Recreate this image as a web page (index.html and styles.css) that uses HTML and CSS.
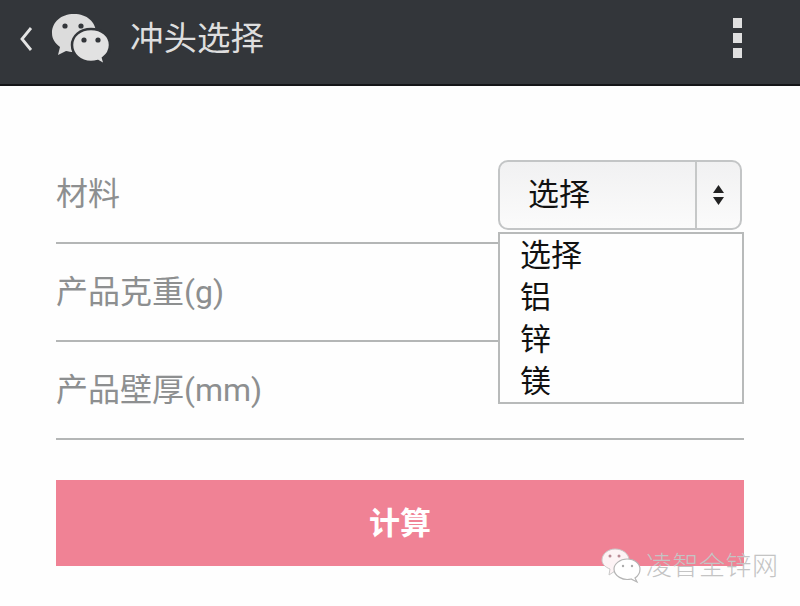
FILE: index.html
```html
<!DOCTYPE html>
<html>
<head>
  <meta http-equiv="content-type" content="text/html; charset=UTF-8">
  <title>冲头选择</title>
  <link rel="stylesheet" href="styles.css">
</head>
<body>
<div class="topbar">
  <svg class="back" width="14" height="26" viewBox="0 0 14 26"><path d="M12 2 L3 13 L12 24" fill="none" stroke="#e4e4e4" stroke-width="2.8"/></svg>
  <svg class="logo" width="60" height="54" viewBox="0 0 60 54">
    <path d="M23 1 C36 1 45 9 45 20 C45 31 36 39 23 39 C20 39 17 38.500 15 38 L7 42 L9 34 C4 30 1 26 1 20 C1 9 10 1 23 1 Z" fill="#dcdcdc"/>
    <path d="M40 16 C51 16 59 23 59 32 C59 38 56 42 52 45 L54 52 L47 48 C45 48.500 42 49 40 49 C29 49 21 41 21 32 C21 23 29 16 40 16 Z" fill="#e2e2e2" stroke="#33363a" stroke-width="2.500"/>
    <circle cx="14" cy="13" r="2.600" fill="#33363a"/>
    <circle cx="30" cy="13" r="2.600" fill="#33363a"/>
    <circle cx="33" cy="27" r="2.600" fill="#33363a"/>
    <circle cx="47" cy="27" r="2.600" fill="#33363a"/>
  </svg>
  <span class="title">冲头选择</span>
  <div class="dots"><i></i><i></i><i></i></div>
</div>

<div class="form">
  <div class="row"><span class="label">材料</span>
    <div class="select">
      <span class="select-text">选择</span>
      <span class="select-arrows">
        <svg width="11" height="20" viewBox="0 0 11 20"><path d="M5.500 0 L11 8 L0 8 Z M5.500 20 L0 12 L11 12 Z" fill="#222"/></svg>
      </span>
    </div>
    <ul class="options">
      <li>选择</li>
      <li>铝</li>
      <li>锌</li>
      <li>镁</li>
    </ul>
  </div>
  <div class="row"><span class="label">产品克重(g)</span></div>
  <div class="row"><span class="label">产品壁厚(mm)</span></div>
  <div class="btn-calc">计算</div>
</div>

<div class="watermark">
  <svg width="42" height="36" viewBox="0 0 42 36">
    <path d="M15 1 C23 1 29 6 29 12 C29 18 23 23 15 23 L9 27 L10 21 C5 19 2 16 2 12 C2 6 8 1 15 1 Z" fill="#fdf3f5" stroke="#c9c9c9" stroke-width="1"/>
    <path d="M27 11 C35 11 40 16 40 21 C40 25 38 28 35 30 L37 34 L31 31 C23 33 14 28 14 21 C14 16 20 11 27 11 Z" fill="#fff" stroke="#b5b5b5" stroke-width="1.200"/>
    <circle cx="10" cy="8" r="1.500" fill="#b98a94"/>
    <circle cx="19" cy="8" r="1.500" fill="#b98a94"/>
    <circle cx="23" cy="18" r="1.200" fill="#aaa"/>
    <circle cx="32" cy="18" r="1.200" fill="#aaa"/>
  </svg>
  <span class="watermark-text">凌智全锌网</span>
</div>
</body>
</html>
```
FILE: styles.css
```css
* { box-sizing: border-box; }
body {
	margin: 0px;
	padding: 0px;
	width: 800px;
	height: 606px;
	overflow: hidden;
	position: relative;
	background-color: #fefefe;
	font-family: "Noto Sans CJK SC", "Noto Sans", sans-serif;
}
.topbar {
	height: 86px;
	background-color: #33363a;
	border-bottom: 2px solid #141517;
	display: flex;
	align-items: center;
	padding: 0 58px 8px 19px;
}
.back { margin-right: 18px; margin-top: 2px; }
.logo { margin-right: 19px; margin-top: 4px; }
.title {
	color: #dedede;
	font-size: 33.500px;
	line-height: 44px;
	margin-top: -4px;
}
.dots {
	margin-left: auto;
	display: flex;
	flex-direction: column;
	gap: 5px;
}
.dots i {
	display: block;
	width: 9px;
	height: 10px;
	background-color: #e0e0e0;
}
.form { padding: 60px 56px 0 56px; }
.row {
	height: 98px;
	border-bottom: 2px solid #b4b6b6;
	position: relative;
	padding-top: 24px;
}
.label {
	color: #8d8f90;
	font-size: 32px;
	line-height: 48px;
	font-family: Roboto, "Noto Sans CJK SC", sans-serif;
}
.select {
	position: absolute;
	left: 442px;
	top: 14px;
	width: 244px;
	height: 70px;
	border: 2px solid #c3c5c6;
	border-radius: 10px;
	background: linear-gradient(#f1f1f2, #fbfbfb);
	display: flex;
	color: #111;
}
.select-text {
	flex: 1;
	font-size: 31px;
	line-height: 60px;
	padding-left: 28px;
	border-right: 2px solid #c6c8c8;
}
.select-arrows {
	width: 43px;
	display: flex;
	align-items: center;
	justify-content: center;
}
.options {
	list-style: none;
	margin: 0;
	position: absolute;
	z-index: 2;
	left: 442px;
	top: 86px;
	width: 246px;
	height: 172px;
	padding: 0 0 0 20px;
	border: 2px solid #b8baba;
	background-color: #fefefe;
	color: #111;
	font-size: 31px;
	line-height: 38px;
}
.options li { margin-bottom: 4px; }
.btn-calc {
	margin-top: 40px;
	height: 86px;
	background-color: #f08295;
	color: #fff;
	font-size: 31px;
	font-weight: 700;
	line-height: 82px;
	text-align: center;
}
.watermark {
	position: absolute;
	left: 600px;
	top: 548px;
	display: flex;
	align-items: center;
	gap: 4px;
}
.watermark-text {
	color: #c4c4c4;
	font-size: 26px;
	letter-spacing: 0.500px;
	font-weight: 300;
	line-height: 32px;
	margin-top: -4px;
}
```
